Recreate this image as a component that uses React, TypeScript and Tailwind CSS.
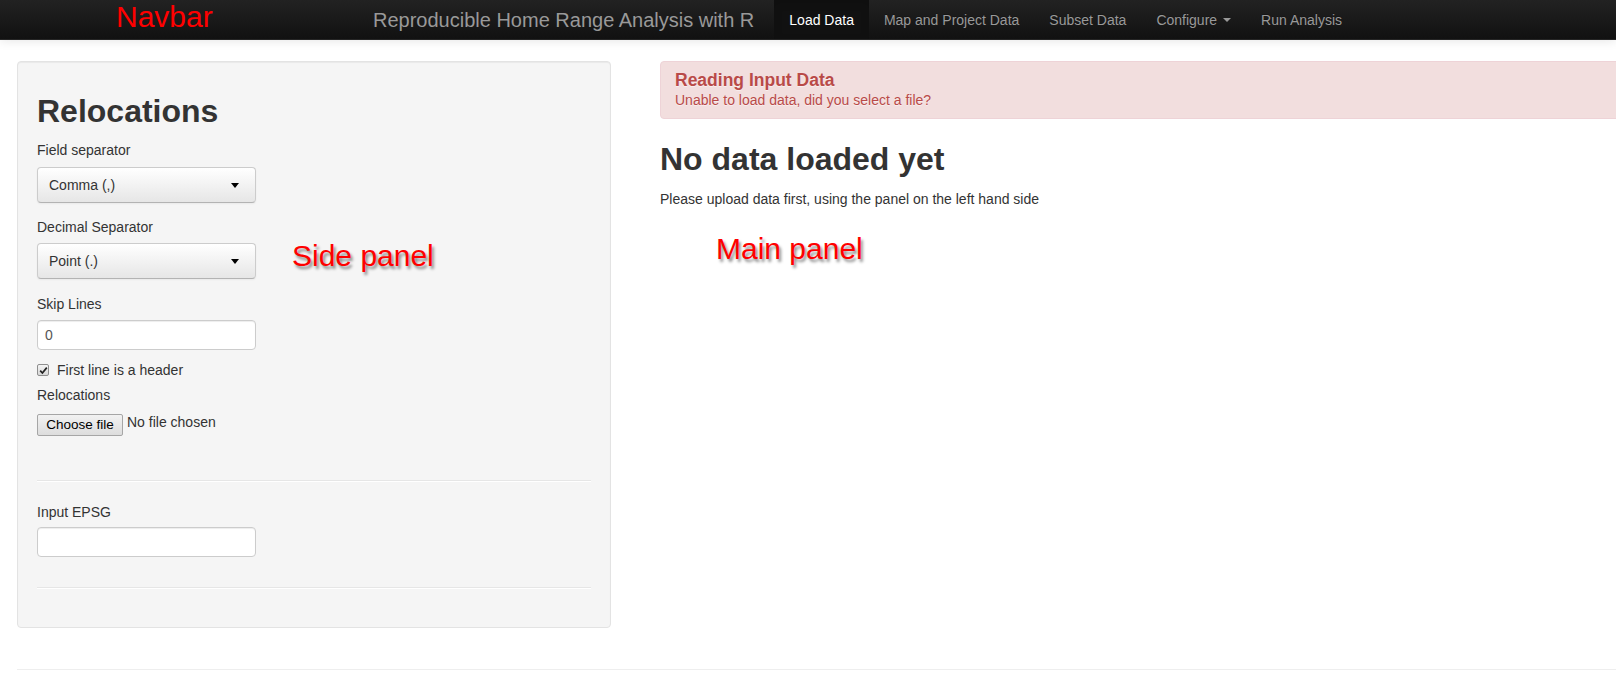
import React from "react";

function SelectBox({ value }: { value: string }) {
  return (
    <div className="flex h-[36px] w-[219px] items-center justify-between rounded-[4px] border border-[#cccccc] border-b-[#b3b3b3] bg-[linear-gradient(to_bottom,#ffffff,#e6e6e6)] pl-[11px] pr-[16px] text-[14px] text-[#333] shadow-[inset_0_1px_0_rgba(255,255,255,0.2),0_1px_2px_rgba(0,0,0,0.05)]">
      <span>{value}</span>
      <span className="h-0 w-0 border-x-[4px] border-t-[5px] border-x-transparent border-t-black" />
    </div>
  );
}

function TextInput({ value }: { value?: string }) {
  return (
    <div className="flex h-[30px] w-[219px] items-center rounded-[4px] border border-[#cccccc] bg-white px-[7px] text-[14px] text-[#555] shadow-[inset_0_1px_1px_rgba(0,0,0,0.075)]">
      {value}
    </div>
  );
}

function Hr() {
  return <div className="h-0 border-t border-b border-t-[#e6e6e6] border-b-white" />;
}

const navItems = [
  { label: "Load Data", active: true },
  { label: "Map and Project Data" },
  { label: "Subset Data" },
  { label: "Configure", caret: true },
  { label: "Run Analysis" },
];

export default function App() {
  return (
    <div className="relative min-h-[691px] w-full overflow-hidden bg-white font-['Liberation_Sans',Arial,sans-serif] text-[14px] leading-[20px] text-[#333]">
      {/* Navbar */}
      <div className="relative z-10 flex h-[40px] items-stretch border-b border-[#252525] bg-[linear-gradient(to_bottom,#222222,#111111)] pl-[353px] shadow-[0_1px_10px_rgba(0,0,0,0.1)]">
        <div className="px-[20px] py-[10px] text-[20px] leading-[20px] text-[#999]">
          Reproducible Home Range Analysis with R
        </div>
        <div className="flex items-stretch">
          {navItems.map((item) => (
            <div
              key={item.label}
              className={
                item.active
                  ? "flex items-center bg-[#111] px-[15px] text-white shadow-[inset_0_3px_8px_rgba(0,0,0,0.125)]"
                  : "flex items-center px-[15px] text-[#999] [text-shadow:0_-1px_0_rgba(0,0,0,0.25)]"
              }
            >
              <span>{item.label}</span>
              {item.caret && (
                <span className="ml-[6px] mt-[1px] h-0 w-0 border-x-[4px] border-t-[4px] border-x-transparent border-t-[#999]" />
              )}
            </div>
          ))}
        </div>
      </div>

      {/* Body row */}
      <div className="flex items-start">
        {/* Side panel (well) */}
        <div className="ml-[17px] mt-[21px] w-[594px] shrink-0 rounded-[4px] border border-[#e3e3e3] bg-[#f5f5f5] px-[19px] pb-[19px] pt-[19px] shadow-[inset_0_1px_1px_rgba(0,0,0,0.05)]">
          <h2 className="mt-[10px] text-[32px] font-bold leading-[40px] text-[#333]">Relocations</h2>

          <div className="mt-[9px] leading-[20px]">Field separator</div>
          <div className="mt-[7px]">
            <SelectBox value="Comma (,)" />
          </div>

          <div className="mt-[14px] leading-[20px]">Decimal Separator</div>
          <div className="mt-[6px]">
            <SelectBox value="Point (.)" />
          </div>

          <div className="mt-[15px] leading-[20px]">Skip Lines</div>
          <div className="mt-[6px]">
            <TextInput value="0" />
          </div>

          <div className="mt-[10px] flex h-[20px] items-center">
            <span className="flex h-[12px] w-[12px] items-center justify-center rounded-[2px] border border-[#8e8e8e] bg-[linear-gradient(to_bottom,#f4f4f4,#d8d8d8)]">
              <svg width="9" height="9" viewBox="0 0 9 9">
                <path d="M1.2 4.6 L3.4 7 L7.8 1.6" fill="none" stroke="#222" strokeWidth="1.7" />
              </svg>
            </span>
            <span className="ml-[8px]">First line is a header</span>
          </div>

          <div className="mt-[5px] leading-[20px]">Relocations</div>
          <div className="mt-[9px] flex items-start">
            <div className="flex h-[22px] w-[86px] items-center justify-center rounded-[2px] border border-[#a6a6a6] bg-[linear-gradient(to_bottom,#f2f2f2,#dddddd)] text-[13.5px] leading-none text-black">
              Choose file
            </div>
            <span className="ml-[4px] mt-[-2px] text-[14px] leading-[20px] text-[#333]">No file chosen</span>
          </div>

          <div className="mt-[44px]">
            <Hr />
          </div>

          <div className="mt-[20px] leading-[20px]">Input EPSG</div>
          <div className="mt-[5px]">
            <TextInput />
          </div>

          <div className="mb-[19px] mt-[30px]">
            <Hr />
          </div>
        </div>

        {/* Main panel */}
        <div className="ml-[49px] mr-[-280px] mt-[21px] min-w-0 flex-1">
          <div className="rounded-[4px] border border-[#eed3d7] bg-[#f2dede] py-[8px] pl-[14px] pr-[35px] text-[#b94a48] [text-shadow:0_1px_0_rgba(255,255,255,0.5)]">
            <h4 className="text-[17.5px] font-bold leading-[20px]">Reading Input Data</h4>
            <p className="text-[14px] leading-[20px]">Unable to load data, did you select a file?</p>
          </div>
          <h2 className="mt-[20px] text-[32px] font-bold leading-[40px] text-[#333]">No data loaded yet</h2>
          <p className="mt-[10px] leading-[20px]">Please upload data first, using the panel on the left hand side</p>
        </div>
      </div>

      {/* Footer rule */}
      <div className="ml-[17px] mt-[41px] border-t border-[#eeeeee]" />

      {/* Annotations */}
      <div className="absolute left-[116px] top-[1px] z-20 text-[30px] leading-[32px] text-[#ff0000]">Navbar</div>
      <div className="absolute left-[292px] top-[241px] z-20 text-[30px] leading-none text-[#ff0000] [text-shadow:2px_3px_3px_rgba(0,0,0,0.45)]">
        Side panel
      </div>
      <div className="absolute left-[716px] top-[234px] z-20 text-[30px] leading-none text-[#ff0000] [text-shadow:2px_3px_3px_rgba(0,0,0,0.45)]">
        Main panel
      </div>
    </div>
  );
}
